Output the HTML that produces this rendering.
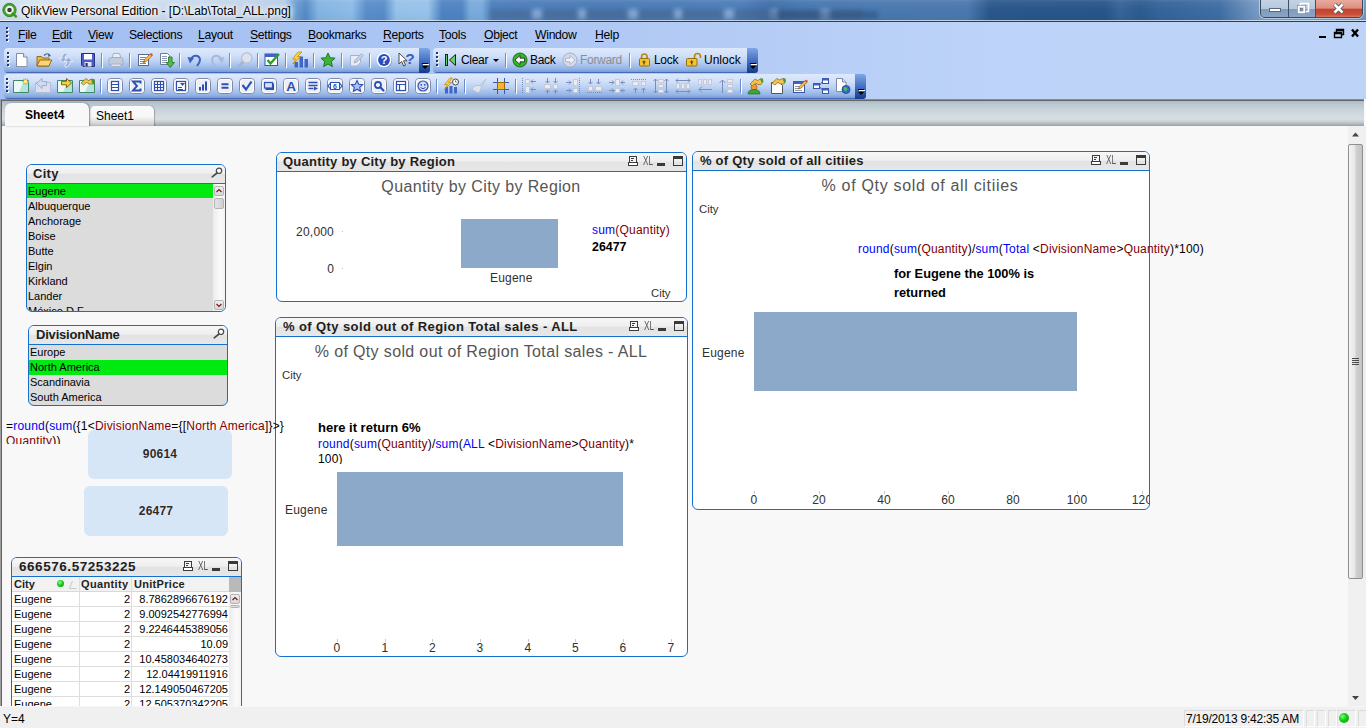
<!DOCTYPE html>
<html><head><meta charset="utf-8"><title>QlikView Personal Edition - [D:\Lab\Total_ALL.png]</title>
<style>
*{box-sizing:border-box;margin:0;padding:0}
html,body{width:1366px;height:728px;overflow:hidden}
body{position:relative;font-family:"Liberation Sans",sans-serif;font-size:12px;color:#000;background:#bdd3f7}
.abs{position:absolute}
#title{position:absolute;left:0;top:0;width:1366px;height:22px;
 background:linear-gradient(90deg,#cfdff0 0px,#d4e2f1 40px,#cddcee 150px,#c0d4ea 250px,#b4cce7 284px,#6c9dd2 296px,#558bc8 306px,#84b4e2 318px,#8dbce8 352px,#5a8fcb 366px,#588dc9 384px,#96c2ea 396px,#98c3ea 428px,#4f84c2 442px,#4f84c2 462px,#79abdc 470px,#79abdc 482px,#4d7fbc 492px,#4a7ab6 600px,#4c7db8 740px,#3f6ea8 770px,#4677b1 800px,#4a79b0 880px,#4a78ae 968px,#2a578b 990px,#28558a 1105px,#36649a 1120px,#2d5b8f 1140px,#35649a 1160px,#406ea4 1220px,#6c92bd 1250px,#7c9fc7 1262px,#6f97c4 1366px);}
#title .shade{position:absolute;left:0;top:0;width:100%;height:20px;background:linear-gradient(180deg,rgba(255,255,255,.12) 0,rgba(255,255,255,.05) 2px,rgba(255,255,255,.0) 50%,rgba(0,0,0,.04) 100%)}
#title .smg{position:absolute;top:9px;height:10px;filter:blur(2px)}
#title .ln{position:absolute;left:0;top:21px;width:100%;height:1px;background:#2e3e52}
#title .ln2{position:absolute;left:0;top:20px;width:100%;height:1px;background:rgba(235,242,250,.72)}
#title .txt{position:absolute;left:21px;top:4px;font-size:12px;line-height:15px;white-space:nowrap;color:#000;text-shadow:0 0 6px #fff,0 0 8px #fff,0 0 4px #fff}
#menubar{position:absolute;left:0;top:22px;width:1366px;height:26px;background:linear-gradient(90deg,#a3bff2 0,#a8c3f3 300px,#b3cbf5 700px,#bdd3f9 1000px,#bdd3f8 1366px)}
#menubar span.mi{position:absolute;top:6px;font-size:12.2px;line-height:15px;white-space:nowrap;letter-spacing:-.3px}
#menubar u{text-decoration:underline;text-underline-offset:1.5px}
.grip{position:absolute;width:3px}
.grip i{position:absolute;left:0;width:2px;height:2px;background:#1f3576;box-shadow:1px 1px 0 #fff}
.tbbg{position:absolute;height:25px;border-radius:4px 0 0 4px;background:linear-gradient(180deg,#dde9fc 0,#d2e1f9 7px,#b9cff3 14px,#93b3e6 21px,#7a9edb 23.500px,#4a6fbd 24px,#3f64b2 25px)}
.tbend{position:absolute;width:11px;height:25px;border-radius:0 3px 3px 0;background:linear-gradient(180deg,#7fa6e6 0,#4470c4 50%,#123a8c 100%)}
.tbend:after{content:"";position:absolute;left:3px;top:18px;border-left:3px solid transparent;border-right:3px solid transparent;border-top:3px solid #000}
.tbend:before{content:"";position:absolute;left:3px;top:15px;width:6px;height:1px;background:#000;box-shadow:1px 1px 0 #fff}
.sep{position:absolute;width:1px;height:14px;margin-top:1px;background:#6a8ccb;box-shadow:1px 1px 0 #fff}
svg{position:absolute;overflow:visible}
.t.tbt{font-size:12px;line-height:15px;letter-spacing:-.3px}
.box{position:absolute;border:1px solid #1470cc;border-radius:6px;background:#fff;overflow:hidden}
.cap{position:absolute;left:0;top:0;right:0;border-bottom:1px solid #1470cc;background:linear-gradient(180deg,#f7f7f7 0,#efefef 46%,#e3e3e3 50%,#e7e7e7 100%)}
.capt{position:absolute;font-weight:bold;font-size:13px;line-height:16px;white-space:nowrap;color:#1e1e1e}
.t{position:absolute;white-space:nowrap;line-height:14px;font-size:12px;letter-spacing:.2px}
.l11{position:absolute;white-space:nowrap;font-size:11px;line-height:15px;height:15px}
.ct{position:absolute;white-space:nowrap;font-size:16px;line-height:20px;color:#555;text-align:center}
.ax{position:absolute;white-space:nowrap;font-size:12px;line-height:14px;color:#303030;text-align:center;width:40px;letter-spacing:.2px}
.bl{color:#0000ff}.rd{color:#800000}
.xl{position:absolute;font-size:13.5px;line-height:12px;color:#555;transform:scaleX(.6);transform-origin:0 0;letter-spacing:0}
.tick{position:absolute;width:1px;height:3px;background:#c8c8c8}
</style></head><body>
<div id="title"><div class="smg" style="left:490px;width:372px;background:repeating-linear-gradient(90deg,rgba(70,92,122,.36) 0,rgba(70,92,122,.36) 40px,rgba(175,203,232,.55) 44px,rgba(175,203,232,.55) 50px,rgba(70,92,122,.36) 54px,rgba(70,92,122,.36) 86px,rgba(175,203,232,.55) 90px,rgba(175,203,232,.55) 96px)"></div><div class="smg" style="left:770px;width:108px;top:11px;height:8px;background:rgba(30,60,100,.35)"></div><div class="shade"></div>
<svg style="left:2px;top:2px" width="16" height="16" viewBox="0 0 16 16"><circle cx="7.5" cy="8" r="6.6" fill="#4aa52e" stroke="#2f7d1c" stroke-width="1"/><circle cx="7.5" cy="8" r="4.2" fill="#f4f7f2"/><circle cx="7.5" cy="8" r="2.3" fill="#3a3d42"/><path d="M10.5 11.5 L14 14.5" stroke="#3d9426" stroke-width="2.4" stroke-linecap="round"/></svg>
<div class="txt">QlikView Personal Edition - [D:\Lab\Total_ALL.png]</div>
<div class="ln"></div><div class="ln2"></div>
<div class="abs" style="left:1260px;top:-1px;width:103px;height:19px;border:1px solid #3a4a5e;border-radius:0 0 5px 5px;overflow:hidden;box-shadow:0 0 0 1px rgba(255,255,255,.45)">
 <div class="abs" style="left:0;top:0;width:28px;height:18px;background:linear-gradient(180deg,#c3d3e3 0,#b5c8dc 48%,#7f9cbd 52%,#8aa7c7 100%);border-right:1px solid #3f5168"></div>
 <div class="abs" style="left:28px;top:0;width:27px;height:18px;background:linear-gradient(180deg,#c3d3e3 0,#b5c8dc 48%,#7f9cbd 52%,#8aa7c7 100%);border-right:1px solid #3f5168"></div>
 <div class="abs" style="left:55px;top:0;width:48px;height:18px;background:linear-gradient(180deg,#e9a99d 0,#dd8e80 45%,#c4432b 52%,#c9503a 80%,#dc8a6e 100%)"></div>
</div>
<svg style="left:1260px;top:0" width="103" height="18" viewBox="0 0 103 18"><rect x="9.5" y="8.5" width="11" height="3" fill="#fff" stroke="#5a6577" stroke-width="1"/>
<rect x="40.500" y="3.5" width="8" height="8" fill="none" stroke="#fff" stroke-width="1.6"/><rect x="37.5" y="5.500" width="8" height="8" fill="#b7c7da" stroke="#5a6577" stroke-width="0.8"/><rect x="38.500" y="6.500" width="6" height="6" fill="none" stroke="#fff" stroke-width="1.8"/><rect x="40.5" y="8.500" width="2" height="2" fill="#8aa2bd" stroke="#5a6577" stroke-width="0.6"/>
<path d="M74.5 4.500 L82.5 12.5 M82.5 4.500 L74.5 12.5" stroke="#4d4f58" stroke-width="4.2"/><path d="M74.500 4.500 L82.500 12.500 M82.500 4.500 L74.500 12.500" stroke="#fff" stroke-width="2.6"/></svg>
</div>
<div id="menubar">
<div class="grip" style="left:6px;top:5px"><i style="top:0"></i><i style="top:4px"></i><i style="top:8px"></i><i style="top:12px"></i></div>
<span class="mi" style="left:18px"><u>F</u>ile</span>
<span class="mi" style="left:52px"><u>E</u>dit</span>
<span class="mi" style="left:88px"><u>V</u>iew</span>
<span class="mi" style="left:129px">Sele<u>c</u>tions</span>
<span class="mi" style="left:198px"><u>L</u>ayout</span>
<span class="mi" style="left:250px"><u>S</u>ettings</span>
<span class="mi" style="left:308px"><u>B</u>ookmarks</span>
<span class="mi" style="left:383px"><u>R</u>eports</span>
<span class="mi" style="left:439px"><u>T</u>ools</span>
<span class="mi" style="left:484px"><u>O</u>bject</span>
<span class="mi" style="left:535px"><u>W</u>indow</span>
<span class="mi" style="left:595px"><u>H</u>elp</span>
<svg style="left:1318px;top:6px" width="44" height="12" viewBox="0 0 44 12"><rect x="1" y="8" width="7" height="2" fill="#000"/><path d="M18.500 1.500 h7 v5 h-7 z M18.500 2.500 h7" fill="none" stroke="#000" stroke-width="1.400"/><path d="M16.500 4.500 h7 v5 h-7 z M16.500 5.500 h7" fill="#bfd5f8" stroke="#000" stroke-width="1.400"/><path d="M34 1.500 L40 8.500 M40 1.500 L34 8.500" stroke="#000" stroke-width="2.4"/></svg>
</div>
<!-- toolbar zone background -->
<div class="abs" style="left:0;top:48px;width:1366px;height:51px;background:linear-gradient(90deg,#a3bff2 0,#a8c3f3 300px,#b3cbf5 700px,#bdd3f9 1000px,#bdd3f8 1366px)"></div>
<!-- tab strip -->
<div class="abs" style="left:0;top:99px;width:1366px;height:27px;background:linear-gradient(180deg,#8c8c8c 0,#8c8c8c 1px,#666 1px,#666 2px,#a9bcc8 2px,#bccad2 6px,#c9d3da 11px,#d8dfe4 20px,#c6cdd1 23px,#a4acb0 26px,#969ea2 27px)"></div>
<div class="abs" style="left:0;top:99px;width:1px;height:607px;background:#a0a0a0"></div>
<div class="abs" style="left:1px;top:100px;width:1px;height:606px;background:#606060"></div>
<!-- sheet bg -->
<div class="abs" style="left:2px;top:126px;width:1346px;height:580px;background:#f8f8f8"></div>
<div class="abs" style="left:1364px;top:99px;width:2px;height:609px;background:#fafafa"></div>
<!-- tabs -->
<div class="abs" style="left:90px;top:106px;width:64px;height:20px;border-radius:5px 5px 0 0;background:linear-gradient(180deg,#fbfbfb 0,#f6f6f6 55%,#d9d9d9 85%,#b9b9b9 100%);box-shadow:1px 0 1px rgba(0,0,0,.25)"></div>
<div class="abs" style="left:96px;top:109px;font-size:12px;line-height:14px;white-space:nowrap">Sheet1</div>
<div class="abs" style="left:5px;top:103px;width:84px;height:23px;border-radius:6px 6px 0 0;background:#f8f8f8;box-shadow:1px 0 2px rgba(0,0,0,.35)"></div>
<div class="abs" style="left:25px;top:108px;font-size:12px;line-height:14px;font-weight:bold;white-space:nowrap">Sheet4</div>
<!-- v scrollbar -->
<div class="abs" style="left:1348px;top:126px;width:18px;height:580px;background:#f0f0f0"></div>
<div class="abs" style="left:1348px;top:144px;width:15px;height:435px;border:1px solid #8f8f8f;border-radius:2px;background:linear-gradient(90deg,#f4f4f4 0,#e6e6e6 45%,#cfcfd1 55%,#c4c4c8 100%)"></div>
<svg style="left:1348px;top:126px" width="16" height="581" viewBox="0 0 16 581"><path d="M4 10.500 L7.500 6.500 L11 10.500 Z" fill="#454545"/><path d="M4 570 L11 570 L7.500 574 Z" fill="#454545"/><path d="M4 232.500 h7 M4 234.500 h7 M4 236.500 h7 M4 238.500 h7" stroke="#4a4a4a" stroke-width="1"/></svg>
<!-- status -->
<div class="abs" style="left:0;top:706px;width:1366px;height:22px;background:#f0f0f0;border-top:1px solid #f6f6f6"></div>
<div class="abs" style="left:3px;top:712px;font-size:12px;line-height:14px">Y=4</div>
<div class="abs" style="left:1184px;top:710px;width:120px;height:17px;border:1px solid #dcdcdc;border-right-color:#fff;border-bottom-color:#fff"></div>
<div class="abs" style="left:1186px;top:712px;font-size:12px;line-height:14px;white-space:nowrap;letter-spacing:-.22px">7/19/2013 9:42:35 AM</div>
<div class="abs" style="left:1306px;top:710px;width:9px;height:17px;border:1px solid #dcdcdc;border-right-color:#fff;border-bottom-color:#fff"></div>
<div class="abs" style="left:1317px;top:710px;width:9px;height:17px;border:1px solid #dcdcdc;border-right-color:#fff;border-bottom-color:#fff"></div>
<div class="abs" style="left:1328px;top:710px;width:9px;height:17px;border:1px solid #dcdcdc;border-right-color:#fff;border-bottom-color:#fff"></div>
<div class="abs" style="left:1337px;top:710px;width:19px;height:17px;border:1px solid #dcdcdc;border-right-color:#fff;border-bottom-color:#fff"></div>
<div class="abs" style="left:1358px;top:710px;width:9px;height:17px;border:1px solid #dcdcdc;border-bottom-color:#fff"></div>
<div class="abs" style="left:1339px;top:713px;width:10px;height:10px;border-radius:5px;background:radial-gradient(circle at 35% 35%,#7dff7d 0,#14cf14 40%,#089908 100%)"></div>
<div class="tbbg" style="left:4px;top:48px;width:415px"></div><div class="tbend" style="left:419px;top:48px"></div>
<div class="grip" style="left:7px;top:52px"><i style="top:0"></i><i style="top:4px"></i><i style="top:8px"></i><i style="top:12px"></i></div>
<svg style="left:15px;top:52px" width="16" height="16" viewBox="0 0 16 16"><path d="M1.500 1.500 h7 l3.500 3.500 v9.500 h-10.500 z" fill="#fff" stroke="#7d8aa8" stroke-width="1"/><path d="M8.500 1.500 v3.500 h3.500" fill="#dfe6f2" stroke="#7d8aa8" stroke-width="1"/><path d="M12.700 6 v9.200 h-10" stroke="#a9b4cc" stroke-width="1" fill="none"/></svg>
<svg style="left:36px;top:52px" width="16" height="16" viewBox="0 0 16 16"><path d="M1 4.500 h4.500 l1.500 1.500 h6 v8 h-12 z" fill="#e8b64c" stroke="#9a6a14" stroke-width="1"/><path d="M1 14 l2.800 -6 h12 l-3 6 z" fill="#fbd779" stroke="#9a6a14" stroke-width="1"/><path d="M8 3.500 q3.500 -3.500 6 0" fill="none" stroke="#4a5f9a" stroke-width="1.200"/><path d="M12.500 1.500 l2.500 2.500 l-3 .8 z" fill="#4a5f9a"/></svg>
<svg style="left:58px;top:52px" width="16" height="16" viewBox="0 0 16 16"><path d="M8.500 .8 q-5 1 -4.500 5.700 h-3 l4.500 4.500 l4.500 -4.500 h-3 q-.3 -3 2.500 -3.700 z" fill="#9cb0d8" stroke="#e3eaf6" stroke-width="1"/><path d="M7.500 15.200 q5 -1 4.500 -5.700 h3 l-4.500 -4.500 l-4.500 4.500 h3 q.3 3 -2.500 3.700 z" fill="#9cb0d8" stroke="#e3eaf6" stroke-width="1"/></svg>
<svg style="left:80px;top:52px" width="16" height="16" viewBox="0 0 16 16"><path d="M1.500 1.500 h13 v13 h-11.500 l-1.500 -1.500 z" fill="#4d5fc4" stroke="#27337e" stroke-width="1"/><rect x="4" y="2" width="8" height="5.500" fill="#fff"/><rect x="4.500" y="10" width="7" height="4.500" fill="#dfe3f3"/><rect x="5.500" y="11" width="2.200" height="3.500" fill="#27337e"/></svg>
<div class="sep" style="left:101px;top:52px"></div>
<svg style="left:108px;top:52px" width="16" height="16" viewBox="0 0 16 16"><path d="M4 6 l1.500 -4.500 h6 l1.500 4.500" fill="#e9edf5" stroke="#a7b1c8" stroke-width="1"/><path d="M1 7 l2.500 -1.500 h10 l1.500 1.500 v5.500 h-14 z" fill="#c3cbdd" stroke="#a2acc4" stroke-width="1"/><path d="M3 12 h10 v2.500 h-10 z" fill="#dfe4ee" stroke="#a7b1c8" stroke-width="1"/></svg>
<div class="sep" style="left:129px;top:52px"></div>
<svg style="left:137px;top:52px" width="16" height="16" viewBox="0 0 16 16"><rect x="1.500" y="2.500" width="10" height="11" fill="#fff" stroke="#5a6a8c" stroke-width="1"/><path d="M3 5.500 h6 M3 7.500 h6 M3 9.500 h4 M3 11.500 h6" stroke="#7a86a6" stroke-width="1"/><path d="M6.500 10.500 l1 -2.800 l6 -6 l1.800 1.800 l-6 6 z" fill="#f5c04a" stroke="#8a5a14" stroke-width=".7"/><path d="M12.800 2.400 l.9 -.9 q1 -.6 1.700 .2 q.6 .8 0 1.600 l-.8 .9 z" fill="#d9534a"/><path d="M6.500 10.500 l.5 -1.400 l.9 .9 z" fill="#333"/></svg>
<svg style="left:159px;top:52px" width="16" height="16" viewBox="0 0 16 16"><path d="M1.500 1.500 h7 l2 2 v9 h-9 z" fill="#fff" stroke="#6d7b9c" stroke-width="1"/><path d="M3 4.500 h5 M3 6.500 h5 M3 8.500 h5 M3 10.500 h4" stroke="#8d98b4" stroke-width="1"/><path d="M9.500 5 h3.500 v5.500 h2.500 l-4.200 5 l-4.200 -5 h2.400 z" fill="#56b947" stroke="#2a7a22" stroke-width=".9"/></svg>
<div class="sep" style="left:179px;top:52px"></div>
<svg style="left:187px;top:52px" width="16" height="16" viewBox="0 0 16 16"><path d="M3.500 8.500 q2 -6 7 -4.500 q4 2 1.500 7 l-2 3" fill="none" stroke="#3d62c0" stroke-width="2"/><path d="M.500 5 l6.500 1 l-4 5.500 z" fill="#3d62c0"/></svg>
<svg style="left:209px;top:52px" width="16" height="16" viewBox="0 0 16 16"><path d="M12.500 8.500 q-2 -6 -7 -4.500 q-4 2 -1.500 7 l2 3" fill="none" stroke="#aab8da" stroke-width="2"/><path d="M15.500 5 l-6.500 1 l4 5.500 z" fill="#aab8da"/></svg>
<div class="sep" style="left:229px;top:52px"></div>
<svg style="left:237px;top:52px" width="16" height="16" viewBox="0 0 16 16"><path d="M6 10 L1.800 14.200" stroke="#aab4cc" stroke-width="2.800" stroke-linecap="round"/><circle cx="9.800" cy="6" r="5.200" fill="#dde3ee" stroke="#b3bdd3" stroke-width="1.200"/></svg>
<div class="sep" style="left:257px;top:52px"></div>
<svg style="left:264px;top:52px" width="16" height="16" viewBox="0 0 16 16"><rect x="1" y="2" width="12.500" height="11.500" fill="#fff" stroke="#3a55a5" stroke-width="1"/><rect x="1" y="2" width="12.500" height="3" fill="#3f62c4"/><path d="M3.500 8 l3 3.500 l8.500 -9.500" fill="none" stroke="#2f9d27" stroke-width="2.400"/></svg>
<div class="sep" style="left:285px;top:52px"></div>
<svg style="left:292px;top:52px" width="16" height="16" viewBox="0 0 16 16"><rect x="2.500" y="10" width="3.500" height="5.500" fill="#3f66c9"/><rect x="7.500" y="4.500" width="3.500" height="11" fill="#3f66c9"/><rect x="12.500" y="7" width="3.500" height="8.500" fill="#3f66c9"/><path d="M6 0 l-5.500 7 h3 l-2.500 5 l7.500 -7.500 h-3 l4.500 -4.500 z" fill="#fbd242" stroke="#b98713" stroke-width=".7"/></svg>
<div class="sep" style="left:313px;top:52px"></div>
<svg style="left:320px;top:52px" width="16" height="16" viewBox="0 0 16 16"><path d="M8 1 l2.100 4.700 l5 .5 l-3.800 3.400 l1.100 5 l-4.400 -2.600 l-4.400 2.600 l1.100 -5 l-3.800 -3.400 l5 -.5 z" fill="#3fb438" stroke="#1d7a1a" stroke-width="1"/></svg>
<div class="sep" style="left:341px;top:52px"></div>
<svg style="left:349px;top:52px" width="16" height="16" viewBox="0 0 16 16"><path d="M1.500 3.500 h10 v7 l-3.500 3.500 h-6.500 z" fill="#e8ecf4" stroke="#a9b3cb" stroke-width="1"/><path d="M5 11 l1 -2.800 l6.500 -6.500 l1.800 1.800 l-6.500 6.500 z" fill="#c9d1e4" stroke="#9aa6c2" stroke-width=".8"/></svg>
<div class="sep" style="left:369px;top:52px"></div>
<svg style="left:376px;top:52px" width="17" height="17" viewBox="0 0 17 17"><circle cx="8.600" cy="8.800" r="7.300" fill="#5a6a94" opacity=".55"/><circle cx="8" cy="8" r="7.400" fill="#fff"/><circle cx="8" cy="8" r="5.900" fill="#2a4cc0"/><text x="8" y="12" font-family="Liberation Sans,sans-serif" font-weight="bold" font-size="11" fill="#fff" text-anchor="middle">?</text></svg>
<svg style="left:398px;top:52px" width="18" height="16" viewBox="0 0 18 16"><path d="M1 1 v11 l2.700 -2.500 l2 4.500 l1.800 -.8 l-2 -4.400 h3.600 z" fill="#fff" stroke="#3a3a3a" stroke-width=".9"/><text x="12" y="12" font-family="Liberation Sans,sans-serif" font-weight="bold" font-size="15.500" fill="#3c5fbe" text-anchor="middle">?</text></svg>
<div class="tbbg" style="left:433px;top:48px;width:314px"></div><div class="tbend" style="left:747px;top:48px"></div>
<div class="grip" style="left:436px;top:52px"><i style="top:0"></i><i style="top:4px"></i><i style="top:8px"></i><i style="top:12px"></i></div>
<svg style="left:444px;top:52px" width="13" height="16" viewBox="0 0 13 16"><rect x="1.500" y="2.500" width="2" height="11" fill="#62cf6c" stroke="#222" stroke-width="1"/><path d="M11.500 2.500 v11 l-6 -5.500 z" fill="#62cf6c" stroke="#222" stroke-width="1"/></svg>
<div class="t tbt" style="left:461px;top:53px">Clear</div>
<div class="abs" style="left:493px;top:59px;border-left:3px solid transparent;border-right:3px solid transparent;border-top:3px solid #000"></div>
<div class="sep" style="left:505px;top:52px"></div>
<svg style="left:512px;top:52px" width="16" height="16" viewBox="0 0 16 16"><circle cx="8" cy="8" r="7" fill="#35b32d" stroke="#1b6c18" stroke-width="1"/><path d="M3 8 l5 -4.500 v2.700 h4.500 v3.600 h-4.500 v2.700 z" fill="#fff" stroke="#222" stroke-width=".8"/></svg>
<div class="t tbt" style="left:530px;top:53px">Back</div>
<svg style="left:562px;top:52px" width="16" height="16" viewBox="0 0 16 16"><circle cx="8" cy="8" r="7" fill="#d5dbea" stroke="#a3aec9" stroke-width="1"/><path d="M13 8 l-5 -4.500 v2.700 h-4.500 v3.600 h4.500 v2.700 z" fill="#eef1f8" stroke="#9ea9c4" stroke-width=".8"/></svg>
<div class="t tbt" style="left:580px;top:53px;color:#8d8d8d">Forward</div>
<div class="sep" style="left:629px;top:52px"></div>
<svg style="left:637px;top:52px" width="14" height="16" viewBox="0 0 14 16"><path d="M4.500 7 v-2 q0 -3 2.800 -3 q2.800 0 2.800 3 v2" fill="none" stroke="#b8860b" stroke-width="1.600"/><rect x="2.500" y="6.500" width="10" height="7.500" rx="1" fill="#f4c430" stroke="#9a6e0a" stroke-width="1"/><path d="M7 8.500 v4 M5.500 10 h3" stroke="#5a3d00" stroke-width="1.200"/></svg>
<div class="t tbt" style="left:654px;top:53px">Lock</div>
<svg style="left:685px;top:52px" width="17" height="16" viewBox="0 0 17 16"><path d="M9.500 7 v-2.500 q0 -3 3 -3 q3 0 3 3 v1.500" fill="none" stroke="#b8860b" stroke-width="1.600"/><rect x="1.500" y="6.500" width="10.500" height="7.500" rx="1" fill="#f4c430" stroke="#9a6e0a" stroke-width="1"/><path d="M6.700 8.500 v4 M5.200 10 h3" stroke="#5a3d00" stroke-width="1.200"/></svg>
<div class="t tbt" style="left:704px;top:53px;letter-spacing:0">Unlock</div>
<div class="tbbg" style="left:4px;top:74px;width:851px"></div><div class="tbend" style="left:855px;top:74px"></div>
<div class="grip" style="left:6px;top:78px"><i style="top:0"></i><i style="top:4px"></i><i style="top:8px"></i><i style="top:12px"></i></div>
<svg style="left:13px;top:78px" width="16" height="16" viewBox="0 0 16 16"><path d="M.500 2.500 h15 v12 h-15 z" fill="#b4e4dc" stroke="#3f8a66" stroke-width="1"/><path d="M1 3 h10 l-5 11 h-5 z" fill="#fff" opacity=".75"/><path d="M12.500 0 v7 M9 3.500 h7 M10 1 l5 5 M15 1 l-5 5" stroke="#f2b90f" stroke-width="1.200"/><circle cx="12.500" cy="3.500" r="1.500" fill="#fff6c0"/></svg>
<svg style="left:35px;top:78px" width="16" height="16" viewBox="0 0 16 16"><path d="M.500 4.500 h15 v10 h-15 z" fill="#d9dfee" stroke="#b4bdd6" stroke-width="1"/><path d="M1.500 5.500 l5.500 -5 v3 h4.500 v4 h-4.500 v3 z" fill="#d3dbee" stroke="#94a7d2" stroke-width=".9"/></svg>
<svg style="left:57px;top:78px" width="16" height="16" viewBox="0 0 16 16"><path d="M.500 2.500 h15 v12 h-15 z" fill="#b4e4dc" stroke="#3f8a66" stroke-width="1"/><path d="M1 3 h10 l-5 11 h-5 z" fill="#fff" opacity=".75"/><path d="M14.500 5 l-5 -4.500 v2.800 h-5 v3.500 h5 v2.800 z" fill="#f7cf3a" stroke="#7a5a0a" stroke-width=".9"/></svg>
<svg style="left:79px;top:78px" width="16" height="16" viewBox="0 0 16 16"><path d="M.500 2.500 h15 v12 h-15 z" fill="#b4e4dc" stroke="#3f8a66" stroke-width="1"/><path d="M1 3 h10 l-5 11 h-5 z" fill="#fff" opacity=".75"/><path d="M2 5 l5 -4.500 l2.500 2 l3 -1.500 q3 0 3 2.500 l-1 2.500 h-4 l-3 -1.500 l-3 2.500 z" fill="#f3c44a" stroke="#8a6414" stroke-width=".7"/><path d="M12 1 h3.500 v5 h-2 z" fill="#3f9a3a"/></svg>
<div class="sep" style="left:100px;top:78px"></div>
<svg style="left:107px;top:78px" width="16" height="16" viewBox="0 0 16 16"><rect x=".5" y=".5" width="15" height="15" rx="3.500" fill="#eceff6" stroke="#7f8aa6" stroke-width="1"/><rect x="1.500" y="1.500" width="13" height="13" rx="2.500" fill="none" stroke="#fff" stroke-width="1"/><rect x="4.500" y="3.500" width="7" height="9" fill="#fff" stroke="#2f4fb3" stroke-width="1.200"/><path d="M4.500 6.500 h7 M4.500 9.500 h7" stroke="#2f4fb3" stroke-width="1.200"/></svg>
<svg style="left:129px;top:78px" width="16" height="16" viewBox="0 0 16 16"><rect x=".5" y=".5" width="15" height="15" rx="3.500" fill="#eceff6" stroke="#7f8aa6" stroke-width="1"/><rect x="1.500" y="1.500" width="13" height="13" rx="2.500" fill="none" stroke="#fff" stroke-width="1"/><path d="M11.500 5.500 v-2 h-7.500 l4 4.500 l-4 4.500 h7.500 v-2" fill="none" stroke="#2f4fb3" stroke-width="1.900"/></svg>
<svg style="left:151px;top:78px" width="16" height="16" viewBox="0 0 16 16"><rect x=".5" y=".5" width="15" height="15" rx="3.500" fill="#eceff6" stroke="#7f8aa6" stroke-width="1"/><rect x="1.500" y="1.500" width="13" height="13" rx="2.500" fill="none" stroke="#fff" stroke-width="1"/><rect x="3.500" y="3.500" width="9" height="9" fill="#fff" stroke="#2f4fb3" stroke-width="1.200"/><path d="M6.500 3.500 v9 M9.500 3.500 v9 M3.500 6.500 h9 M3.500 9.500 h9" stroke="#2f4fb3" stroke-width="1.100"/></svg>
<svg style="left:173px;top:78px" width="16" height="16" viewBox="0 0 16 16"><rect x=".5" y=".5" width="15" height="15" rx="3.500" fill="#eceff6" stroke="#7f8aa6" stroke-width="1"/><rect x="1.500" y="1.500" width="13" height="13" rx="2.500" fill="none" stroke="#fff" stroke-width="1"/><rect x="3.500" y="3.500" width="9" height="9" fill="#fff" stroke="#2f4fb3" stroke-width="1.200"/><path d="M7 5 h5 l-2.500 3 z" fill="#2f4fb3"/><path d="M5 9.500 h4 M5 11.500 h5" stroke="#2f4fb3" stroke-width="1"/></svg>
<svg style="left:195px;top:78px" width="16" height="16" viewBox="0 0 16 16"><rect x=".5" y=".5" width="15" height="15" rx="3.500" fill="#eceff6" stroke="#7f8aa6" stroke-width="1"/><rect x="1.500" y="1.500" width="13" height="13" rx="2.500" fill="none" stroke="#fff" stroke-width="1"/><rect x="4" y="9" width="2" height="3.500" fill="#2f4fb3"/><rect x="7" y="6.500" width="2" height="6" fill="#2f4fb3"/><rect x="10" y="3.500" width="2" height="9" fill="#2f4fb3"/></svg>
<svg style="left:217px;top:78px" width="16" height="16" viewBox="0 0 16 16"><rect x=".5" y=".5" width="15" height="15" rx="3.500" fill="#eceff6" stroke="#7f8aa6" stroke-width="1"/><rect x="1.500" y="1.500" width="13" height="13" rx="2.500" fill="none" stroke="#fff" stroke-width="1"/><path d="M4.500 6.300 h7 M4.500 9.700 h7" stroke="#2f4fb3" stroke-width="2"/></svg>
<svg style="left:239px;top:78px" width="16" height="16" viewBox="0 0 16 16"><rect x=".5" y=".5" width="15" height="15" rx="3.500" fill="#eceff6" stroke="#7f8aa6" stroke-width="1"/><rect x="1.500" y="1.500" width="13" height="13" rx="2.500" fill="none" stroke="#fff" stroke-width="1"/><path d="M3.500 7 l3.500 4.500 l5.500 -8" fill="none" stroke="#2f4fb3" stroke-width="2.200"/></svg>
<svg style="left:261px;top:78px" width="16" height="16" viewBox="0 0 16 16"><rect x=".5" y=".5" width="15" height="15" rx="3.500" fill="#eceff6" stroke="#7f8aa6" stroke-width="1"/><rect x="1.500" y="1.500" width="13" height="13" rx="2.500" fill="none" stroke="#fff" stroke-width="1"/><rect x="4.500" y="5.500" width="8.500" height="6.500" fill="#2f4fb3"/><rect x="3.500" y="4.500" width="8" height="5.500" fill="#cfe3fa" stroke="#2f4fb3" stroke-width="1.200"/></svg>
<svg style="left:283px;top:78px" width="16" height="16" viewBox="0 0 16 16"><rect x=".5" y=".5" width="15" height="15" rx="3.500" fill="#eceff6" stroke="#7f8aa6" stroke-width="1"/><rect x="1.500" y="1.500" width="13" height="13" rx="2.500" fill="none" stroke="#fff" stroke-width="1"/><text x="8" y="13" font-family="Liberation Sans,sans-serif" font-size="13.500" font-weight="bold" fill="#2f4fb3" text-anchor="middle">A</text></svg>
<svg style="left:305px;top:78px" width="16" height="16" viewBox="0 0 16 16"><rect x=".5" y=".5" width="15" height="15" rx="3.500" fill="#eceff6" stroke="#7f8aa6" stroke-width="1"/><rect x="1.500" y="1.500" width="13" height="13" rx="2.500" fill="none" stroke="#fff" stroke-width="1"/><path d="M3.500 4.500 h9 M3.500 7.500 h9 M3.500 10.500 h5" stroke="#2f4fb3" stroke-width="1.600"/><path d="M9 8.500 l4 2 l-4 2 z" fill="#2f4fb3"/></svg>
<svg style="left:327px;top:78px" width="16" height="16" viewBox="0 0 16 16"><rect x=".5" y=".5" width="15" height="15" rx="3.500" fill="#eceff6" stroke="#7f8aa6" stroke-width="1"/><rect x="1.500" y="1.500" width="13" height="13" rx="2.500" fill="none" stroke="#fff" stroke-width="1"/><rect x="3.500" y="4.500" width="9" height="7" fill="#fff" stroke="#2f4fb3" stroke-width="1"/><path d="M3 5.500 l-2 2.500 l2 2.500 M13 5.500 l2 2.500 l-2 2.500" fill="none" stroke="#2f4fb3" stroke-width="1.200"/><text x="8" y="10.500" font-family="Liberation Sans,sans-serif" font-size="7" font-weight="bold" fill="#2f4fb3" text-anchor="middle">6</text></svg>
<svg style="left:349px;top:78px" width="16" height="16" viewBox="0 0 16 16"><rect x=".5" y=".5" width="15" height="15" rx="3.500" fill="#eceff6" stroke="#7f8aa6" stroke-width="1"/><rect x="1.500" y="1.500" width="13" height="13" rx="2.500" fill="none" stroke="#fff" stroke-width="1"/><path d="M8 2.500 l1.700 3.700 l4 .4 l-3 2.700 l.9 4 l-3.600 -2.100 l-3.600 2.100 l.9 -4 l-3 -2.700 l4 -.4 z" fill="#a9c4f5" stroke="#2f4fb3" stroke-width="1.100"/></svg>
<svg style="left:371px;top:78px" width="16" height="16" viewBox="0 0 16 16"><rect x=".5" y=".5" width="15" height="15" rx="3.500" fill="#eceff6" stroke="#7f8aa6" stroke-width="1"/><rect x="1.500" y="1.500" width="13" height="13" rx="2.500" fill="none" stroke="#fff" stroke-width="1"/><circle cx="7" cy="7" r="3" fill="#fff" stroke="#2f4fb3" stroke-width="1.800"/><path d="M9.300 9.300 l3.200 3.200" stroke="#2f4fb3" stroke-width="2.200" stroke-linecap="round"/></svg>
<svg style="left:393px;top:78px" width="16" height="16" viewBox="0 0 16 16"><rect x=".5" y=".5" width="15" height="15" rx="3.500" fill="#eceff6" stroke="#7f8aa6" stroke-width="1"/><rect x="1.500" y="1.500" width="13" height="13" rx="2.500" fill="none" stroke="#fff" stroke-width="1"/><rect x="3.500" y="3.500" width="9" height="9" fill="#fff" stroke="#2f4fb3" stroke-width="1.200"/><path d="M3.500 6.500 h9 M6.500 6.500 v6" stroke="#2f4fb3" stroke-width="1.200"/></svg>
<svg style="left:415px;top:78px" width="16" height="16" viewBox="0 0 16 16"><rect x=".5" y=".5" width="15" height="15" rx="3.500" fill="#eceff6" stroke="#7f8aa6" stroke-width="1"/><rect x="1.500" y="1.500" width="13" height="13" rx="2.500" fill="none" stroke="#fff" stroke-width="1"/><circle cx="8" cy="8" r="5" fill="#cfdcf7" stroke="#2f4fb3" stroke-width="1.200"/><circle cx="6.200" cy="6.800" r=".9" fill="#2f4fb3"/><circle cx="9.800" cy="6.800" r=".9" fill="#2f4fb3"/><path d="M5.500 9.500 q2.500 2.500 5 0" fill="none" stroke="#2f4fb3" stroke-width="1"/></svg>
<div class="sep" style="left:436px;top:78px"></div>
<svg style="left:443px;top:78px" width="16" height="16" viewBox="0 0 16 16"><rect x="2" y="9" width="3" height="6.500" fill="#3f66c9"/><rect x="6.500" y="8" width="3" height="7.500" fill="#3f66c9"/><rect x="11" y="9" width="3" height="6.500" fill="#3f66c9"/><path d="M7 0 l-5.500 6.500 h3 l-3 5 l7 -7 h-3 l4 -4.500 z" fill="#fbd242" stroke="#b98713" stroke-width=".7"/><circle cx="12.500" cy="4" r="3" fill="#fff" stroke="#333" stroke-width=".9"/><path d="M12.500 2.500 v1.500 h1.200" stroke="#333" stroke-width=".7" fill="none"/></svg>
<div class="sep" style="left:464px;top:78px"></div>
<svg style="left:471px;top:78px" width="16" height="16" viewBox="0 0 16 16"><path d="M15 1 l-6 6.500 l1.500 1.500 z" fill="#d5dae6" stroke="#b3bbce" stroke-width=".8"/><path d="M9 7.500 l-4.500 0 q-3 2 -3.500 4 l6 3.500 q3 -2 3.500 -6 z" fill="#dde2ec" stroke="#b3bbce" stroke-width=".8"/></svg>
<svg style="left:493px;top:78px" width="16" height="16" viewBox="0 0 16 16"><path d="M4.500 0 v16 M11.500 0 v16 M0 4.500 h16 M0 11.500 h16" stroke="#3458b8" stroke-width="1"/><rect x="4.500" y="4.500" width="7" height="7" fill="#f7b733" stroke="#9a6a0a" stroke-width="1"/></svg>
<div class="sep" style="left:515px;top:78px"></div>
<svg style="left:521px;top:78px" width="16" height="16" viewBox="0 0 16 16"><path d="M1.500 0 v16" stroke="#7a8cb8" stroke-dasharray="1 1"/><rect x="4.500" y="1.500" width="4" height="4" fill="#ececee" stroke="#c4cad9"/><rect x="4.500" y="8.500" width="4" height="6" fill="#ececee" stroke="#c4cad9"/><path d="M15 3.500 h-5 m2 -2 l-2 2 l2 2 M15 11.500 h-5 m2 -2 l-2 2 l2 2" fill="none" stroke="#7a8cb8"/></svg>
<svg style="left:543px;top:78px" width="16" height="16" viewBox="0 0 16 16"><rect x="1.500" y="6.500" width="6" height="4" fill="#ececee" stroke="#c4cad9"/><rect x="10.500" y="6.500" width="4" height="4" fill="#ececee" stroke="#c4cad9"/><path d="M4.500 0 v5 m-2 -2 l2 2 l2 -2 M12.500 0 v5 m-2 -2 l2 2 l2 -2 M4.500 16 v-4 m-2 2 l2 -2 l2 2 M12.500 16 v-4 m-2 2 l2 -2 l2 2" fill="none" stroke="#7a8cb8"/></svg>
<svg style="left:565px;top:78px" width="16" height="16" viewBox="0 0 16 16"><path d="M14.500 0 v16" stroke="#7a8cb8" stroke-dasharray="1 1"/><rect x="8.500" y="1.500" width="4" height="6" fill="#ececee" stroke="#c4cad9"/><rect x="8.500" y="10.500" width="4" height="4" fill="#ececee" stroke="#c4cad9"/><path d="M1 4.500 h5 m-2 -2 l2 2 l-2 2 M1 12.500 h5 m-2 -2 l2 2 l-2 2" fill="none" stroke="#7a8cb8"/></svg>
<svg style="left:587px;top:78px" width="16" height="16" viewBox="0 0 16 16"><path d="M0 14.500 h16" stroke="#7a8cb8" stroke-dasharray="1 1"/><rect x="1.500" y="8.500" width="4" height="4" fill="#ececee" stroke="#c4cad9"/><rect x="8.500" y="8.500" width="6" height="4" fill="#ececee" stroke="#c4cad9"/><path d="M3.500 1 v5 m-2 -2 l2 2 l2 -2 M11.500 1 v5 m-2 -2 l2 2 l2 -2" fill="none" stroke="#7a8cb8"/></svg>
<svg style="left:609px;top:78px" width="16" height="16" viewBox="0 0 16 16"><rect x="6.500" y="1.500" width="4" height="6" fill="#ececee" stroke="#c4cad9"/><rect x="6.500" y="10.500" width="4" height="4" fill="#ececee" stroke="#c4cad9"/><path d="M0 4.500 h5 m-2 -2 l2 2 l-2 2 M16 4.500 h-4 m2 -2 l-2 2 l2 2 M0 12.500 h5 m-2 -2 l2 2 l-2 2 M16 12.500 h-4 m2 -2 l-2 2 l2 2" fill="none" stroke="#7a8cb8"/></svg>
<svg style="left:631px;top:78px" width="16" height="16" viewBox="0 0 16 16"><path d="M0 1.500 h16" stroke="#7a8cb8" stroke-dasharray="1 1"/><rect x="1.500" y="3.500" width="6" height="4" fill="#ececee" stroke="#c4cad9"/><rect x="10.500" y="3.500" width="4" height="4" fill="#ececee" stroke="#c4cad9"/><path d="M4.500 15 v-5 m-2 2 l2 -2 l2 2 M12.500 15 v-5 m-2 2 l2 -2 l2 2" fill="none" stroke="#7a8cb8"/></svg>
<svg style="left:653px;top:78px" width="16" height="16" viewBox="0 0 16 16"><rect x="5.500" y="1.500" width="5" height="3" fill="#ececee" stroke="#c4cad9"/><rect x="5.500" y="6.500" width="5" height="3" fill="#ececee" stroke="#c4cad9"/><rect x="5.500" y="11.500" width="5" height="3" fill="#ececee" stroke="#c4cad9"/><path d="M2.500 1 v14 m-2 -2 l2 2 l2 -2 m-4 -10 l2 -2 l2 2 M13.500 1 v14 m-2 -2 l2 2 l2 -2 m-4 -10 l2 -2 l2 2" fill="none" stroke="#7a8cb8"/></svg>
<svg style="left:675px;top:78px" width="16" height="16" viewBox="0 0 16 16"><rect x="1.500" y="5.500" width="3" height="5" fill="#ececee" stroke="#c4cad9"/><rect x="6.500" y="5.500" width="3" height="5" fill="#ececee" stroke="#c4cad9"/><rect x="11.500" y="5.500" width="3" height="5" fill="#ececee" stroke="#c4cad9"/><path d="M1 2.500 h14 m-2 -2 l2 2 l-2 2 m-10 -4 l-2 2 l2 2 M1 13.500 h14 m-2 -2 l2 2 l-2 2 m-10 -4 l-2 2 l2 2" fill="none" stroke="#7a8cb8"/></svg>
<svg style="left:697px;top:78px" width="16" height="16" viewBox="0 0 16 16"><rect x="1.500" y="1.500" width="3" height="5" fill="#ececee" stroke="#c4cad9"/><rect x="6.500" y="1.500" width="3" height="5" fill="#ececee" stroke="#c4cad9"/><rect x="11.500" y="1.500" width="3" height="5" fill="#ececee" stroke="#c4cad9"/><path d="M15 11.500 h-13 m3 -3 l-3 3 l3 3" fill="none" stroke="#7a8cb8"/></svg>
<svg style="left:719px;top:78px" width="16" height="16" viewBox="0 0 16 16"><rect x="8.500" y="1.500" width="5" height="3" fill="#ececee" stroke="#c4cad9"/><rect x="8.500" y="6.500" width="5" height="3" fill="#ececee" stroke="#c4cad9"/><rect x="8.500" y="11.500" width="5" height="3" fill="#ececee" stroke="#c4cad9"/><path d="M3.500 15 v-13 m-3 3 l3 -3 l3 3" fill="none" stroke="#7a8cb8"/></svg>
<div class="sep" style="left:740px;top:78px"></div>
<svg style="left:747px;top:78px" width="16" height="16" viewBox="0 0 16 16"><circle cx="7" cy="9" r="3" fill="#f39a3a" stroke="#a55a10" stroke-width=".7"/><path d="M1 16 q0 -4.500 6 -4.500 q6 0 6 4.500 z" fill="#3fa43a" stroke="#1f6f1c" stroke-width=".7"/><path d="M3 6 l5 -5 l2.500 1.500 l3 -1.500 q2.500 0 2.500 2.500 l-2 3 h-3 l-2.500 -1.500 l-3 3 z" fill="#f3c44a" stroke="#8a6414" stroke-width=".7"/><path d="M13 .5 h3 v4 h-1.500 z" fill="#3f9a3a"/></svg>
<svg style="left:770px;top:78px" width="16" height="16" viewBox="0 0 16 16"><path d="M1.500 4.500 h8 l3 3 v8 h-11 z" fill="#fff" stroke="#555" stroke-width="1"/><path d="M2 5 l5 -4.500 l2.500 1.500 l3 -1.500 q3 0 3 2.500 l-1.500 3 h-3.500 l-2.500 -1.500 l-3 2.500 z" fill="#f3c44a" stroke="#8a6414" stroke-width=".7"/><path d="M12.500 .5 h3 v4 h-1.500 z" fill="#3f9a3a"/></svg>
<svg style="left:792px;top:78px" width="16" height="16" viewBox="0 0 16 16"><rect x="1.500" y="3.500" width="11" height="11" fill="#fff" stroke="#3a55a5" stroke-width="1"/><rect x="1.500" y="3.500" width="11" height="2.500" fill="#3f62c4"/><path d="M3 8.500 h7 M3 10.500 h5 M3 12.500 h7" stroke="#8d98b4" stroke-width="1"/><path d="M6.500 11 l1 -2.800 l6 -6 l1.800 1.800 l-6 6 z" fill="#f5c04a" stroke="#8a5a14" stroke-width=".7"/><path d="M12.800 2.900 l.9 -.9 q1 -.6 1.700 .2 q.6 .8 0 1.600 l-.8 .9 z" fill="#d9534a"/></svg>
<svg style="left:813px;top:78px" width="16" height="16" viewBox="0 0 16 16"><path d="M6 8 l4 -5 M6 8 l4 5" stroke="#3a55a5" stroke-width="1" fill="none"/><rect x=".5" y="5.500" width="6" height="5" fill="#fff" stroke="#3a55a5"/><rect x=".5" y="5.500" width="6" height="2" fill="#3f62c4"/><rect x="9.500" y=".5" width="6" height="5" fill="#fff" stroke="#3a55a5"/><rect x="9.500" y=".5" width="6" height="2" fill="#3f62c4"/><rect x="9.500" y="10.500" width="6" height="5" fill="#fff" stroke="#3a55a5"/><rect x="9.500" y="10.500" width="6" height="2" fill="#3f62c4"/></svg>
<svg style="left:835px;top:78px" width="16" height="16" viewBox="0 0 16 16"><path d="M1.500 .5 h6 l3.500 3.500 v9.500 h-9.500 z" fill="#fff" stroke="#7d8aa8" stroke-width="1"/><path d="M7.500 .5 v3.500 h3.500" fill="#dfe6f2" stroke="#7d8aa8" stroke-width="1"/><circle cx="11" cy="11.500" r="4" fill="#2f6fd0" stroke="#1a3f8a" stroke-width=".8"/><path d="M8.500 10 q2 -2 3.500 0 q1 2 -1 3 q-2 0 -2.500 -3 z" fill="#4fc04a"/></svg>
<div class="box" style="left:26px;top:164px;width:200px;height:148px;background:#dcdcdc">
<div class="cap" style="height:19px"></div><div class="capt" style="left:6px;top:1px;letter-spacing:.3px">City</div><svg style="left:184px;top:2px" width="12" height="12" viewBox="0 0 12 12"><circle cx="8" cy="3.800" r="2.700" fill="#fafafa" stroke="#4a4a4a" stroke-width="1.200"/><path d="M6 6 L1.200 9.800" stroke="#4a4a4a" stroke-width="1.700" stroke-linecap="round"/></svg>
<div class="l11" style="left:0;top:19px;width:186px;background:#00ea12;height:14px;padding-left:1px">Eugene</div>
<div class="l11" style="left:0;top:34px;width:186px;padding-left:1px">Albuquerque</div>
<div class="l11" style="left:0;top:49px;width:186px;padding-left:1px">Anchorage</div>
<div class="l11" style="left:0;top:64px;width:186px;padding-left:1px">Boise</div>
<div class="l11" style="left:0;top:79px;width:186px;padding-left:1px">Butte</div>
<div class="l11" style="left:0;top:94px;width:186px;padding-left:1px">Elgin</div>
<div class="l11" style="left:0;top:109px;width:186px;padding-left:1px">Kirkland</div>
<div class="l11" style="left:0;top:124px;width:186px;padding-left:1px">Lander</div>
<div class="l11" style="left:0;top:139px;width:186px;padding-left:1px">México D.F.</div>
<div class="abs" style="left:186px;top:19px;width:12px;height:127px;background:linear-gradient(90deg,#ececec 0,#fafafa 60%,#f4f4f4 100%)"></div>
<div class="abs" style="left:187px;top:21px;width:10px;height:10px;border:1px solid #b4b4b4;border-radius:2px;background:linear-gradient(180deg,#efefef,#d8d8d8)"></div>
<svg style="left:187px;top:21px" width="10" height="10" viewBox="0 0 10 10"><path d="M2.500 6 L5 3.500 L7.500 6" fill="none" stroke="#7a1010" stroke-width="1.100"/></svg>
<div class="abs" style="left:187px;top:33px;width:10px;height:11px;border:1px solid #b4b4b4;border-radius:2px;background:linear-gradient(90deg,#e4e4e4,#cfcfcf)"></div>
<div class="abs" style="left:187px;top:135px;width:10px;height:10px;border:1px solid #b4b4b4;border-radius:2px;background:linear-gradient(180deg,#efefef,#d8d8d8)"></div>
<svg style="left:187px;top:135px" width="10" height="10" viewBox="0 0 10 10"><path d="M2.500 4 L5 6.500 L7.500 4" fill="none" stroke="#7a1010" stroke-width="1.100"/></svg>
</div>
<div class="box" style="left:28px;top:325px;width:200px;height:81px;background:#dcdcdc">
<div class="cap" style="height:19px"></div><div class="capt" style="left:7px;top:1px;letter-spacing:-.2px">DivisionName</div><svg style="left:184px;top:2px" width="12" height="12" viewBox="0 0 12 12"><circle cx="8" cy="3.800" r="2.700" fill="#fafafa" stroke="#4a4a4a" stroke-width="1.200"/><path d="M6 6 L1.200 9.800" stroke="#4a4a4a" stroke-width="1.700" stroke-linecap="round"/></svg>
<div class="l11" style="left:0;top:19px;width:198px;padding-left:1px">Europe</div>
<div class="l11" style="left:0;top:34px;width:198px;background:#00ea12;padding-left:1px">North America</div>
<div class="l11" style="left:0;top:49px;width:198px;padding-left:1px">Scandinavia</div>
<div class="l11" style="left:0;top:64px;width:198px;padding-left:1px">South America</div>
</div>
<div class="abs" style="left:88px;top:430px;width:144px;height:49px;border-radius:6px;background:#d6e6f7"></div>
<div class="t" style="left:88px;top:447px;width:144px;text-align:center;font-weight:bold;color:#2a2a2a;text-shadow:0 0 1px #fff">90614</div>
<div class="abs" style="left:84px;top:486px;width:144px;height:50px;border-radius:6px;background:#d6e6f7"></div>
<div class="t" style="left:84px;top:504px;width:144px;text-align:center;font-weight:bold;color:#2a2a2a;text-shadow:0 0 1px #fff">26477</div>
<div class="box" style="left:276px;top:152px;width:411px;height:150px">
<div class="cap" style="height:19px"></div><div class="capt" style="left:6px;top:1px;letter-spacing:.23px">Quantity by City by Region</div><svg style="left:351px;top:3px" width="11" height="11" viewBox="0 0 11 11"><rect x="1.500" y="0.500" width="7" height="6" fill="#f4f4f4" stroke="#3c3c3c" stroke-width="1"/><path d="M3 2.500 h3 M3 4.500 h2" stroke="#3c3c3c" stroke-width="1"/><rect x="0.500" y="6.500" width="9" height="3" fill="#fff" stroke="#3c3c3c" stroke-width="1"/></svg><span class="xl" style="left:366px;top:2px">XL</span><div class="abs" style="left:380px;top:10px;width:8px;height:3px;background:#3a3a3a"></div><div class="abs" style="left:396px;top:3px;width:10px;height:10px;border:1px solid #3a3a3a;border-top-width:3px"></div>
<div class="ct" style="left:54px;top:24px;width:300px;letter-spacing:.38px">Quantity by City by Region</div>
<div class="t" style="left:0;top:72px;width:57px;text-align:right;color:#303030">20,000</div>
<div class="t" style="left:0;top:109px;width:57px;text-align:right;color:#303030">0</div>
<div class="abs" style="left:65px;top:78px;width:1px;height:1px;background:#c0c0c0"></div><div class="abs" style="left:65px;top:115px;width:1px;height:1px;background:#c0c0c0"></div>
<div class="abs" style="left:184px;top:66px;width:97px;height:49px;background:#8ca9c9"></div>
<div class="ax" style="left:213px;top:118px;color:#303030">Eugene</div>
<div class="t" style="left:315px;top:70px"><span class="bl">sum</span><span class="rd">(Quantity)</span></div>
<div class="t" style="left:315px;top:87px;font-weight:bold;font-size:12.4px;letter-spacing:0">26477</div>
<div class="t" style="left:374px;top:133px;color:#303030;font-size:11.3px;letter-spacing:0">City</div>
</div>
<div class="box" style="left:275px;top:317px;width:413px;height:340px">
<div class="cap" style="height:19px"></div><div class="capt" style="left:7px;top:1px;letter-spacing:.4px">% of Qty sold out of Region Total sales - ALL</div><svg style="left:353px;top:3px" width="11" height="11" viewBox="0 0 11 11"><rect x="1.500" y="0.500" width="7" height="6" fill="#f4f4f4" stroke="#3c3c3c" stroke-width="1"/><path d="M3 2.500 h3 M3 4.500 h2" stroke="#3c3c3c" stroke-width="1"/><rect x="0.500" y="6.500" width="9" height="3" fill="#fff" stroke="#3c3c3c" stroke-width="1"/></svg><span class="xl" style="left:368px;top:2px">XL</span><div class="abs" style="left:382px;top:10px;width:8px;height:3px;background:#3a3a3a"></div><div class="abs" style="left:398px;top:3px;width:10px;height:10px;border:1px solid #3a3a3a;border-top-width:3px"></div>
<div class="ct" style="left:5px;top:24px;width:400px;letter-spacing:.36px">% of Qty sold out of Region Total sales - ALL</div>
<div class="t" style="left:6px;top:50px;color:#303030;font-size:11.3px;letter-spacing:0">City</div>
<div class="abs" style="left:61px;top:154px;width:286px;height:74px;background:#8ca9c9"></div>
<div class="t" style="left:9px;top:185px;color:#303030">Eugene</div>
<div class="tick" style="left:61px;top:321px"></div><div class="ax" style="left:41px;top:323px">0</div>
<div class="tick" style="left:109px;top:321px"></div><div class="ax" style="left:89px;top:323px">1</div>
<div class="tick" style="left:156px;top:321px"></div><div class="ax" style="left:136.5px;top:323px">2</div>
<div class="tick" style="left:204px;top:321px"></div><div class="ax" style="left:184px;top:323px">3</div>
<div class="tick" style="left:252px;top:321px"></div><div class="ax" style="left:232px;top:323px">4</div>
<div class="tick" style="left:299px;top:321px"></div><div class="ax" style="left:279.5px;top:323px">5</div>
<div class="tick" style="left:347px;top:321px"></div><div class="ax" style="left:327px;top:323px">6</div>
<div class="tick" style="left:395px;top:321px"></div><div class="ax" style="left:375px;top:323px">7</div>
</div>
<div class="t" style="left:318px;top:420px;font-weight:bold;font-size:13px;line-height:16px;letter-spacing:0">here it return 6%</div>
<div class="abs" style="left:318px;top:437px;width:330px;height:27px;overflow:hidden"><div class="t" style="left:0;top:0;line-height:15px;white-space:normal;width:330px"><span class="bl">round</span>(<span class="bl">sum</span>(<span class="rd">Quantity</span>)/<span class="bl">sum</span>(<span class="bl">ALL</span> &lt;<span class="rd">DivisionName</span>&gt;<span class="rd">Quantity</span>)*<br>100)</div></div>
<div class="box" style="left:692px;top:151px;width:458px;height:359px">
<div class="cap" style="height:19px"></div><div class="capt" style="left:7px;top:1px;letter-spacing:.22px">% of Qty sold of all citiies</div><svg style="left:398px;top:3px" width="11" height="11" viewBox="0 0 11 11"><rect x="1.500" y="0.500" width="7" height="6" fill="#f4f4f4" stroke="#3c3c3c" stroke-width="1"/><path d="M3 2.500 h3 M3 4.500 h2" stroke="#3c3c3c" stroke-width="1"/><rect x="0.500" y="6.500" width="9" height="3" fill="#fff" stroke="#3c3c3c" stroke-width="1"/></svg><span class="xl" style="left:413px;top:2px">XL</span><div class="abs" style="left:427px;top:10px;width:8px;height:3px;background:#3a3a3a"></div><div class="abs" style="left:443px;top:3px;width:10px;height:10px;border:1px solid #3a3a3a;border-top-width:3px"></div>
<div class="ct" style="left:27px;top:24px;width:400px;letter-spacing:.68px">% of Qty sold of all citiies</div>
<div class="t" style="left:6px;top:50px;color:#303030;font-size:11.3px;letter-spacing:0">City</div>
<div class="abs" style="left:61px;top:160px;width:323px;height:79px;background:#8ca9c9"></div>
<div class="t" style="left:9px;top:194px;color:#303030">Eugene</div>
<div class="tick" style="left:61px;top:339px"></div><div class="ax" style="left:41px;top:341px">0</div>
<div class="tick" style="left:126px;top:339px"></div><div class="ax" style="left:106px;top:341px">20</div>
<div class="tick" style="left:191px;top:339px"></div><div class="ax" style="left:171px;top:341px">40</div>
<div class="tick" style="left:255px;top:339px"></div><div class="ax" style="left:235px;top:341px">60</div>
<div class="tick" style="left:320px;top:339px"></div><div class="ax" style="left:300px;top:341px">80</div>
<div class="tick" style="left:384px;top:339px"></div><div class="ax" style="left:364px;top:341px">100</div>
<div class="tick" style="left:449px;top:339px"></div><div class="ax" style="left:429px;top:341px">120</div>
</div>
<div class="t" style="left:858px;top:242px"><span class="bl">round</span>(<span class="bl">sum</span>(<span class="rd">Quantity</span>)/<span class="bl">sum</span>(<span class="bl">Total</span> &lt;<span class="rd">DivisionName</span>&gt;<span class="rd">Quantity</span>)*100)</div>
<div class="t" style="left:894px;top:264px;font-weight:bold;font-size:12.8px;line-height:19px;letter-spacing:0">for Eugene the 100% is<br>returned</div>
<div class="abs" style="left:6px;top:418px;width:290px;height:26px;overflow:hidden"><div class="t" style="left:0;top:1px;line-height:15px;letter-spacing:.2px">=<span class="bl">round</span>(<span class="bl">sum</span>({1&lt;<span class="rd">DivisionName</span>={[<span class="rd">North America</span>]}&gt;}<br><span class="rd">Quantity</span>))</div></div>
<div class="abs" style="left:0;top:550px;width:300px;height:156px;overflow:hidden">
<div class="box" style="left:11px;top:7px;width:231px;height:170px">
<div class="cap" style="height:19px"></div><div class="capt" style="left:7px;top:1px;font-size:13.5px;letter-spacing:.55px">666576.57253225</div><svg style="left:171px;top:3px" width="11" height="11" viewBox="0 0 11 11"><rect x="1.500" y="0.500" width="7" height="6" fill="#f4f4f4" stroke="#3c3c3c" stroke-width="1"/><path d="M3 2.500 h3 M3 4.500 h2" stroke="#3c3c3c" stroke-width="1"/><rect x="0.500" y="6.500" width="9" height="3" fill="#fff" stroke="#3c3c3c" stroke-width="1"/></svg><span class="xl" style="left:186px;top:2px">XL</span><div class="abs" style="left:200px;top:10px;width:8px;height:3px;background:#3a3a3a"></div><div class="abs" style="left:216px;top:3px;width:10px;height:10px;border:1px solid #3a3a3a;border-top-width:3px"></div>
<div class="abs" style="left:0;top:19px;width:217px;height:15px;background:#f2f2f2;border-bottom:1px solid #d8d8d8"></div>
<div class="abs" style="left:217px;top:19px;width:12px;height:15px;background:#b9b9b9"></div>
<div class="abs" style="left:217px;top:34px;width:12px;height:140px;background:linear-gradient(90deg,#ececec 0,#fafafa 60%,#f4f4f4 100%)"></div>
<div class="l11" style="left:2px;top:19px;font-weight:bold;color:#222">City</div>
<div class="l11" style="left:69px;top:19px;font-weight:bold;color:#222;letter-spacing:.35px">Quantity</div>
<div class="l11" style="left:122px;top:19px;font-weight:bold;color:#222;letter-spacing:.3px">UnitPrice</div>
<div class="abs" style="left:45px;top:22px;width:7px;height:7px;border-radius:4px;background:radial-gradient(circle at 40% 35%,#8dff8d 0,#16d016 45%,#0a8f0a 100%)"></div>
<svg style="left:57px;top:22px" width="8" height="9" viewBox="0 0 8 9"><path d="M0.500 8.500 L3.500 1 M0.500 8.500 H7.500" fill="none" stroke="#c9c9c9" stroke-width="1"/></svg>
<div class="abs" style="left:0;top:48px;width:217px;height:1px;background:#dedede"></div>
<div class="l11" style="left:2px;top:34px">Eugene</div><div class="l11" style="left:68px;top:34px;width:50px;text-align:right">2</div><div class="l11" style="left:120px;top:34px;width:96px;text-align:right">8.7862896676192</div>
<div class="abs" style="left:0;top:63px;width:217px;height:1px;background:#dedede"></div>
<div class="l11" style="left:2px;top:49px">Eugene</div><div class="l11" style="left:68px;top:49px;width:50px;text-align:right">2</div><div class="l11" style="left:120px;top:49px;width:96px;text-align:right">9.0092542776994</div>
<div class="abs" style="left:0;top:78px;width:217px;height:1px;background:#dedede"></div>
<div class="l11" style="left:2px;top:64px">Eugene</div><div class="l11" style="left:68px;top:64px;width:50px;text-align:right">2</div><div class="l11" style="left:120px;top:64px;width:96px;text-align:right">9.2246445389056</div>
<div class="abs" style="left:0;top:93px;width:217px;height:1px;background:#dedede"></div>
<div class="l11" style="left:2px;top:79px">Eugene</div><div class="l11" style="left:68px;top:79px;width:50px;text-align:right">2</div><div class="l11" style="left:120px;top:79px;width:96px;text-align:right">10.09</div>
<div class="abs" style="left:0;top:108px;width:217px;height:1px;background:#dedede"></div>
<div class="l11" style="left:2px;top:94px">Eugene</div><div class="l11" style="left:68px;top:94px;width:50px;text-align:right">2</div><div class="l11" style="left:120px;top:94px;width:96px;text-align:right">10.458034640273</div>
<div class="abs" style="left:0;top:123px;width:217px;height:1px;background:#dedede"></div>
<div class="l11" style="left:2px;top:109px">Eugene</div><div class="l11" style="left:68px;top:109px;width:50px;text-align:right">2</div><div class="l11" style="left:120px;top:109px;width:96px;text-align:right">12.04419911916</div>
<div class="abs" style="left:0;top:138px;width:217px;height:1px;background:#dedede"></div>
<div class="l11" style="left:2px;top:124px">Eugene</div><div class="l11" style="left:68px;top:124px;width:50px;text-align:right">2</div><div class="l11" style="left:120px;top:124px;width:96px;text-align:right">12.149050467205</div>
<div class="abs" style="left:0;top:153px;width:217px;height:1px;background:#dedede"></div>
<div class="l11" style="left:2px;top:139px">Eugene</div><div class="l11" style="left:68px;top:139px;width:50px;text-align:right">2</div><div class="l11" style="left:120px;top:139px;width:96px;text-align:right">12.505370342205</div>
<div class="abs" style="left:67px;top:19px;width:1px;height:150px;background:#dedede"></div>
<div class="abs" style="left:119px;top:19px;width:1px;height:150px;background:#dedede"></div>
<div class="abs" style="left:218px;top:36px;width:10px;height:10px;border:1px solid #b4b4b4;border-radius:2px;background:linear-gradient(180deg,#efefef,#d8d8d8)"></div>
<svg style="left:218px;top:36px" width="10" height="10" viewBox="0 0 10 10"><path d="M2.500 6 L5 3.500 L7.500 6" fill="none" stroke="#7a1010" stroke-width="1.100"/></svg>
<div class="abs" style="left:218px;top:47px;width:10px;height:3px;border:1px solid #b4b4b4;border-radius:2px;background:#ddd"></div>
</div></div>
</body></html>
